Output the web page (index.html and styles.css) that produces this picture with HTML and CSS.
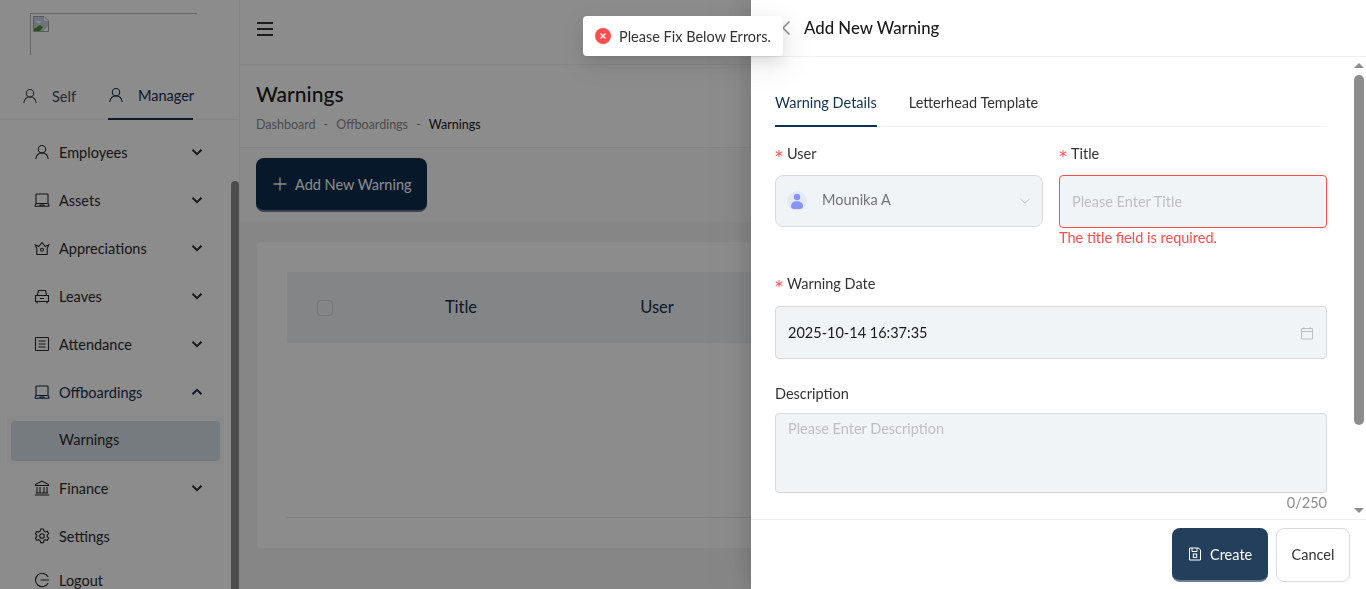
FILE: index.html
```html
<!DOCTYPE html>
<html lang="en">
<head>
    <meta charset="UTF-8">
    <meta name="viewport" content="width=device-width, initial-scale=1.0">
    <title>Warnings</title>
    <link rel="stylesheet" href="styles.css">
</head>
<body>
    <svg class="icon-defs" width="0" height="0">
        <symbol id="i-user" viewBox="0 0 16 16"><circle cx="8" cy="5.200" r="3.700"/><path d="M1.800 15c.4-3.600 2.800-6 6.200-6s5.800 2.400 6.200 6"/></symbol>
        <symbol id="i-laptop" viewBox="0 0 16 16"><rect x="2" y="2" width="12" height="9.500" rx=".5"/><path d="M.8 14.200h14.400M.8 14.200l1.200-2.700h12l1.200 2.700M6 14v-1h4v1"/></symbol>
        <symbol id="i-crown" viewBox="0 0 16 16"><path d="M2.800 14.500h10.400V8.500l1.500-3.700-3.400 1.700L8 2.500 4.700 6.500 1.300 4.800l1.500 3.700z"/><circle cx="8" cy="9.800" r="1.500"/></symbol>
        <symbol id="i-car" viewBox="0 0 16 16"><path d="M3.300 7.500 4.500 2.500h7l1.200 5M1.500 7.500h13v6h-13zM3 13.500v2M13 13.500v2M6 10.500h4"/></symbol>
        <symbol id="i-list" viewBox="0 0 16 16"><rect x="1.500" y="1.500" width="13" height="13" rx=".8"/><path d="M4.500 5h7M4.500 8h7M4.500 11h7"/></symbol>
        <symbol id="i-bank" viewBox="0 0 16 16"><path d="M8 1 1.500 4.500v1h13v-1zM3 7v5.500M6 7v5.500M10 7v5.500M13 7v5.500M1.800 13h12.400M.8 15h14.400"/></symbol>
        <symbol id="i-gear" viewBox="0 0 16 16"><path d="M6.600 1h2.800l.4 2 1.600.9 1.900-.7 1.400 2.400-1.500 1.300v1.800l1.500 1.300-1.400 2.400-1.900-.7-1.600.9-.4 2H6.600l-.4-2-1.600-.9-1.900.7-1.400-2.400 1.500-1.300V7.100L1.300 5.800l1.400-2.400 1.900.7 1.600-.9z"/><circle cx="8" cy="8" r="2.300"/></symbol>
        <symbol id="i-logout" viewBox="0 0 16 16"><path d="M14.200 5A6.700 6.700 0 1 0 14.200 11M6.500 8h8.500"/></symbol>
        <symbol id="i-down" viewBox="0 0 12 12"><path d="M1.500 3.800 6 8.200l4.500-4.400"/></symbol>
    </svg>

    <div class="app">
        <aside class="sidebar">
            <div class="logo-box">
                <div class="broken-img">
                    <svg width="16" height="16" viewBox="0 0 16 16"><path d="M.5.5h10.500l4.500 4.500v10.500H.5z" fill="#c9d4e6" stroke="#a3a3a3"/><path d="M1 15v-2l6-4 3 2-3 4z" fill="#4a9a2e"/><path d="M3 5h5l-1 2H4z" fill="#fff"/><path d="M11 1v4h4zM15 10l-5 5h5z" fill="#fff"/></svg>
                </div>
            </div>
            <div class="role-tabs">
                <div class="role-tab"><svg class="ico"><use href="#i-user"/></svg><span>Self</span></div>
                <div class="role-tab role-tab-active"><svg class="ico"><use href="#i-user"/></svg><span>Manager</span></div>
            </div>
            <nav class="menu">
                <div class="menu-item"><svg class="ico"><use href="#i-user"/></svg><span>Employees</span><svg class="chev"><use href="#i-down"/></svg></div>
                <div class="menu-item"><svg class="ico"><use href="#i-laptop"/></svg><span>Assets</span><svg class="chev"><use href="#i-down"/></svg></div>
                <div class="menu-item"><svg class="ico"><use href="#i-crown"/></svg><span>Appreciations</span><svg class="chev"><use href="#i-down"/></svg></div>
                <div class="menu-item"><svg class="ico"><use href="#i-car"/></svg><span>Leaves</span><svg class="chev"><use href="#i-down"/></svg></div>
                <div class="menu-item"><svg class="ico"><use href="#i-list"/></svg><span>Attendance</span><svg class="chev"><use href="#i-down"/></svg></div>
                <div class="menu-item menu-item-open"><svg class="ico"><use href="#i-laptop"/></svg><span>Offboardings</span><svg class="chev chev-up"><use href="#i-down"/></svg></div>
                <div class="submenu"><div class="submenu-item">Warnings</div></div>
                <div class="menu-item"><svg class="ico"><use href="#i-bank"/></svg><span>Finance</span><svg class="chev"><use href="#i-down"/></svg></div>
                <div class="menu-item"><svg class="ico"><use href="#i-gear"/></svg><span>Settings</span></div>
                <div class="menu-item menu-item-last"><svg class="ico"><use href="#i-logout"/></svg><span>Logout</span></div>
            </nav>
            <div class="side-thumb"></div>
        </aside>

        <main class="content">
            <header class="topbar">
                <div class="hamburger"><i></i><i></i><i></i></div>
            </header>
            <section class="page-head">
                <h1>Warnings</h1>
                <p class="crumbs"><span>Dashboard</span><span>-</span><span>Offboardings</span><span>-</span><b>Warnings</b></p>
            </section>
            <section class="toolbar">
                <button class="btn-add"><svg width="14" height="14" viewBox="0 0 14 14"><path d="M7 .5v13M.5 7h13"/></svg><span>Add New Warning</span></button>
            </section>
            <section class="page-body">
                <div class="card">
                    <div class="table-head">
                        <div class="th-check"><span class="checkbox"></span></div>
                        <div class="th">Title</div>
                        <div class="th">User</div>
                    </div>
                    <div class="table-body"></div>
                </div>
            </section>
        </main>
    </div>

    <div class="mask"></div>

    <div class="drawer">
        <div class="drawer-head">
            <svg class="back" width="10" height="16" viewBox="0 0 10 16"><path d="M8.500 1.500 2 8l6.500 6.500"/></svg>
            <h2>Add New Warning</h2>
        </div>
        <div class="drawer-body">
            <div class="form-tabs">
                <div class="form-tab form-tab-active">Warning Details</div>
                <div class="form-tab">Letterhead Template</div>
            </div>
            <div class="form-row">
                <div class="field">
                    <label class="req">User</label>
                    <div class="control select-box">
                        <span class="avatar"><svg width="14" height="16" viewBox="0 0 14 16"><circle cx="7" cy="4" r="3.200"/><path d="M1 13c0-3 2.500-4.800 6-4.800s6 1.800 6 4.800-2.500 3-6 3-6 0-6-3z"/></svg></span>
                        <span class="select-value">Mounika A</span>
                        <svg class="select-arrow" width="12" height="12"><use href="#i-down"/></svg>
                    </div>
                </div>
                <div class="field">
                    <label class="req">Title</label>
                    <div class="control control-error"><span class="placeholder">Please Enter Title</span></div>
                    <div class="error-text">The title field is required.</div>
                </div>
            </div>
            <div class="field field-date">
                <label class="req">Warning Date</label>
                <div class="control date-box">
                    <span>2025-10-14 16:37:35</span>
                    <svg width="14" height="14" viewBox="0 0 14 14"><path d="M1.500 2.500h11v10.500h-11zM1.500 5.500h11M4 1v2.500M10 1v2.500"/></svg>
                </div>
            </div>
            <div class="field field-desc">
                <label>Description</label>
                <div class="textarea"><span class="placeholder">Please Enter Description</span></div>
                <div class="counter">0/250</div>
            </div>
            <div class="drawer-scroll">
                <span class="arrow-up"></span>
                <span class="drawer-thumb"></span>
                <span class="arrow-down"></span>
            </div>
        </div>
        <div class="drawer-foot">
            <button class="btn-create"><svg width="14" height="14" viewBox="0 0 14 14"><path d="M1.500 1h9l2 2v10h-11zM4 1v3.500h5V1"/><rect x="5.300" y="7" width="3.400" height="3.400"/></svg><span>Create</span></button>
            <button class="btn-cancel">Cancel</button>
        </div>
    </div>

    <div class="toast">
        <svg width="16" height="16" viewBox="0 0 16 16"><circle cx="8" cy="8" r="8" fill="#ff4d4f"/><path d="M5.500 5.500l5 5M10.500 5.500l-5 5" stroke="#fff" stroke-width="1.300"/></svg>
        <span>Please Fix Below Errors.</span>
    </div>
</body>
</html>
```

FILE: styles.css
```css
/* base */
* {
    box-sizing: border-box;
}
html, body {
    margin: 0;
    height: 100%;
    overflow: hidden;
}
body {
    font-family: Lato, "Noto Sans", Arial, sans-serif;
    font-size: 14.5px;
    color: #1a1a1a;
    background-color: #f5f5f5;
}
.icon-defs {
    position: absolute;
}
.app {
    display: flex;
    height: 100vh;
}

/* sidebar */
.sidebar {
    position: relative;
    flex: 0 0 240px;
    background-color: #fff;
    border-right: 1px solid #f0f0f0;
    overflow: hidden;
}
.logo-box {
    height: 72px;
    padding: 13px 0 0 30px;
}
.broken-img {
    width: 167px;
    height: 42px;
    padding: 2px;
    border-top: 1px solid #b8b8b8;
    border-left: 1px solid #b8b8b8;
}
.broken-img svg {
    display: block;
}
.role-tabs {
    display: flex;
    height: 48px;
    padding-left: 22px;
    border-bottom: 1px solid #f0f0f0;
}
.role-tab {
    display: flex;
    align-items: center;
    gap: 14px;
    width: 86px;
    height: 48px;
    color: #3d4f63;
}
.role-tab-active {
    width: 85px;
    color: #12304f;
    border-bottom: 2px solid #12304f;
}
.ico {
    flex: none;
    width: 16px;
    height: 16px;
    fill: none;
    stroke: currentColor;
    stroke-width: 1.100;
}
.menu {
    padding: 8px 0 0 34px;
}
.menu-item {
    display: flex;
    align-items: center;
    height: 48px;
    padding-right: 36px;
    color: #2b2b2b;
}
.menu-item span {
    margin-left: 9px;
}
.menu-item-open {
    color: #12304f;
}
.menu-item-last {
    height: 40px;
}
.chev {
    margin-left: auto;
    width: 12px;
    height: 12px;
    fill: none;
    stroke: currentColor;
    stroke-width: 2;
}
.chev-up {
    transform: rotate(180deg);
}
.submenu {
    margin-left: -27px;
    width: 217px;
    height: 48px;
    padding: 5px 4px 3px;
    background-color: #fafafa;
}
.submenu-item {
    height: 40px;
    line-height: 38px;
    padding-left: 48px;
    border-radius: 4px;
    background-color: #d6e0e8;
    color: #2b2b2b;
}
.side-thumb {
    position: absolute;
    left: 231px;
    top: 181px;
    width: 8px;
    height: 420px;
    border-radius: 4px;
    background-color: #8c8c8c;
}

/* main */
.content {
    flex: 1;
    min-width: 0;
    display: flex;
    flex-direction: column;
}
.topbar {
    height: 65px;
    padding: 22px 0 0 17px;
    background-color: #fff;
    border-bottom: 1px solid #f0f0f0;
}
.hamburger {
    display: flex;
    flex-direction: column;
    gap: 4px;
    width: 16px;
}
.hamburger i {
    display: block;
    height: 2px;
    background-color: #333;
}
.page-head {
    height: 83px;
    padding: 16px 16px 0;
    background-color: #fff;
    border-bottom: 1px solid #f0f0f0;
}
.page-head h1 {
    margin: 0;
    font-size: 21px;
    font-weight: 500;
    line-height: 25px;
}
.crumbs {
    display: flex;
    gap: 8px;
    margin: 11px 0 0;
    font-size: 12.500px;
    line-height: 16px;
    color: #8c8c8c;
}
.crumbs b {
    font-weight: 400;
    color: #1a1a1a;
}
.toolbar {
    height: 74px;
    padding: 10px 16px 0;
    background-color: #fcfcfc;
}
.btn-add {
    display: flex;
    align-items: center;
    gap: 8px;
    width: 171px;
    height: 54px;
    padding: 0 0 0 17px;
    font: inherit;
    color: #fff;
    background-color: #0d2c4e;
    border: 0;
    border-bottom: 2px solid #6d7e90;
    border-radius: 8px;
}
.btn-add svg {
    fill: none;
    stroke: #fff;
    stroke-width: 1.300;
}
.page-body {
    flex: 1;
    padding: 20px 26px 41px 17px;
}
.card {
    height: 306px;
    padding: 30px;
    background-color: #fff;
    border-radius: 4px;
}
.table-head {
    display: grid;
    grid-template-columns: 76px 196px 196px 1fr;
    align-items: center;
    height: 71px;
    background-color: #f1f3f5;
    border-bottom: 1px solid #eef0f2;
}
.th-check {
    padding-left: 30px;
}
.checkbox {
    display: block;
    width: 16px;
    height: 16px;
    margin-top: 2px;
    background-color: #f1f3f5;
    border: 1px solid #d9d9d9;
    border-radius: 4px;
}
.th {
    text-align: center;
    font-size: 16.500px;
    color: #12304f;
}
.table-body {
    height: 175px;
    border-bottom: 1px solid #e9e9e9;
}

/* overlay */
.mask {
    position: fixed;
    inset: 0;
    background-color: rgba(0, 0, 0, 0.45);
}
.drawer {
    position: fixed;
    top: 0;
    right: 0;
    bottom: 0;
    width: 615px;
    display: flex;
    flex-direction: column;
    background-color: #fff;
    box-shadow: -6px 0 16px rgba(0, 0, 0, 0.08), -9px 0 28px rgba(0, 0, 0, 0.05), -12px 0 48px 16px rgba(0, 0, 0, 0.03);
}
.drawer-head {
    display: flex;
    align-items: center;
    gap: 13px;
    flex: 0 0 57px;
    padding-left: 30px;
    border-bottom: 1px solid #f0f0f0;
}
.drawer-head h2 {
    margin: 0 0 2px;
    font-size: 16.800px;
    font-weight: 500;
}
.back {
    fill: none;
    stroke: #8c8c8c;
    stroke-width: 1.500;
}
.drawer-body {
    position: relative;
    flex: 1;
    padding: 24px 39px 0 24px;
    overflow: hidden;
}
.form-tabs {
    display: flex;
    gap: 32px;
    height: 46px;
    border-bottom: 1px solid #f0f0f0;
}
.form-tab {
    height: 46px;
    padding-top: 13px;
    color: #333;
}
.form-tab-active {
    color: #12304f;
    border-bottom: 2px solid #12304f;
}
.form-row {
    display: grid;
    grid-template-columns: 268px 268px;
    gap: 16px;
    margin-top: 16px;
    height: 122px;
}
label {
    display: block;
    height: 22px;
    line-height: 22px;
    margin-bottom: 10px;
    color: #333;
}
.req::before {
    content: "*";
    display: inline-block;
    margin-right: 4px;
    line-height: 1;
    color: #ff4d4f;
    font-family: "DejaVu Sans", sans-serif;
    font-size: 16px;
    transform: translateY(3px);
}
.control {
    display: flex;
    align-items: center;
    height: 53px;
    padding: 0 12px;
    background-color: #f0f4f7;
    border: 1px solid #d9d9d9;
    border-radius: 4px;
}
.select-box {
    height: 52px;
    padding-left: 11px;
    border-radius: 8px;
}
.avatar {
    display: flex;
    flex: none;
    align-items: center;
    justify-content: center;
    width: 20px;
    height: 20px;
    border-radius: 50%;
    background-color: #e2e9fb;
    margin-right: 15px;
}
.avatar svg {
    fill: #8594f5;
}
.select-value {
    margin-bottom: 4px;
    color: #737373;
}
.select-arrow {
    margin: 0 -1px 0 auto;
    fill: none;
    stroke: #bfbfbf;
}
.control-error {
    border-color: #ff4d4f;
}
.placeholder {
    color: #bfbfbf;
}
.error-text {
    height: 20px;
    line-height: 20px;
    color: #ff4d4f;
}
.field-date {
    margin-top: 8px;
}
.field-date label {
    margin-bottom: 11px;
}
.date-box {
    justify-content: space-between;
    color: #1a1a1a;
}
.date-box svg {
    fill: none;
    stroke: #bfbfbf;
}
.field-desc {
    margin-top: 24px;
}
.field-desc label {
    margin-bottom: 8px;
}
.textarea {
    height: 80px;
    padding: 6px 12px;
    background-color: #f0f4f7;
    border: 1px solid #d9d9d9;
    border-radius: 4px;
}
.counter {
    text-align: right;
    line-height: 20px;
    color: #8c8c8c;
}
.drawer-scroll {
    position: absolute;
    top: 0;
    right: 0;
    bottom: 0;
    width: 13px;
    background-color: #fff;
}
.drawer-thumb {
    position: absolute;
    top: 18px;
    left: 1px;
    width: 10px;
    height: 350px;
    border-radius: 5px;
    background-color: #8c8c8c;
}
.arrow-up, .arrow-down {
    position: absolute;
    left: 1px;
    border-left: 5px solid transparent;
    border-right: 5px solid transparent;
}
.arrow-up {
    top: 6px;
    border-bottom: 5px solid #8c8c8c;
}
.arrow-down {
    bottom: 6px;
    border-top: 5px solid #8c8c8c;
}
.drawer-foot {
    display: flex;
    justify-content: flex-end;
    gap: 8px;
    flex: 0 0 70px;
    padding: 8px 16px 0 0;
    border-top: 1px solid #f0f0f0;
}
.drawer-foot button {
    height: 54px;
    font: inherit;
    border-radius: 8px;
}
.btn-create {
    display: flex;
    align-items: center;
    gap: 8px;
    width: 96px;
    padding: 0 0 0 16px;
    color: #fff;
    background-color: #243f5c;
    border: 0;
    border-bottom: 2px solid #6d7e90;
}
.btn-create svg {
    fill: none;
    stroke: #fff;
}
.btn-cancel {
    width: 74px;
    padding: 0 0 1px;
    color: #333;
    background-color: #fff;
    border: 1px solid #d9d9d9;
}

/* toast */
.toast {
    position: fixed;
    top: 16px;
    left: 583px;
    display: flex;
    align-items: center;
    gap: 8px;
    height: 40px;
    width: 200px;
    padding: 0 12px;
    background-color: #fff;
    color: #333;
    border-radius: 4px;
    box-shadow: 0 3px 6px -4px rgba(0, 0, 0, 0.12), 0 6px 16px rgba(0, 0, 0, 0.08), 0 9px 28px 8px rgba(0, 0, 0, 0.05);
}
.toast svg {
    flex: none;
}
.toast span {
    white-space: nowrap;
}
```
